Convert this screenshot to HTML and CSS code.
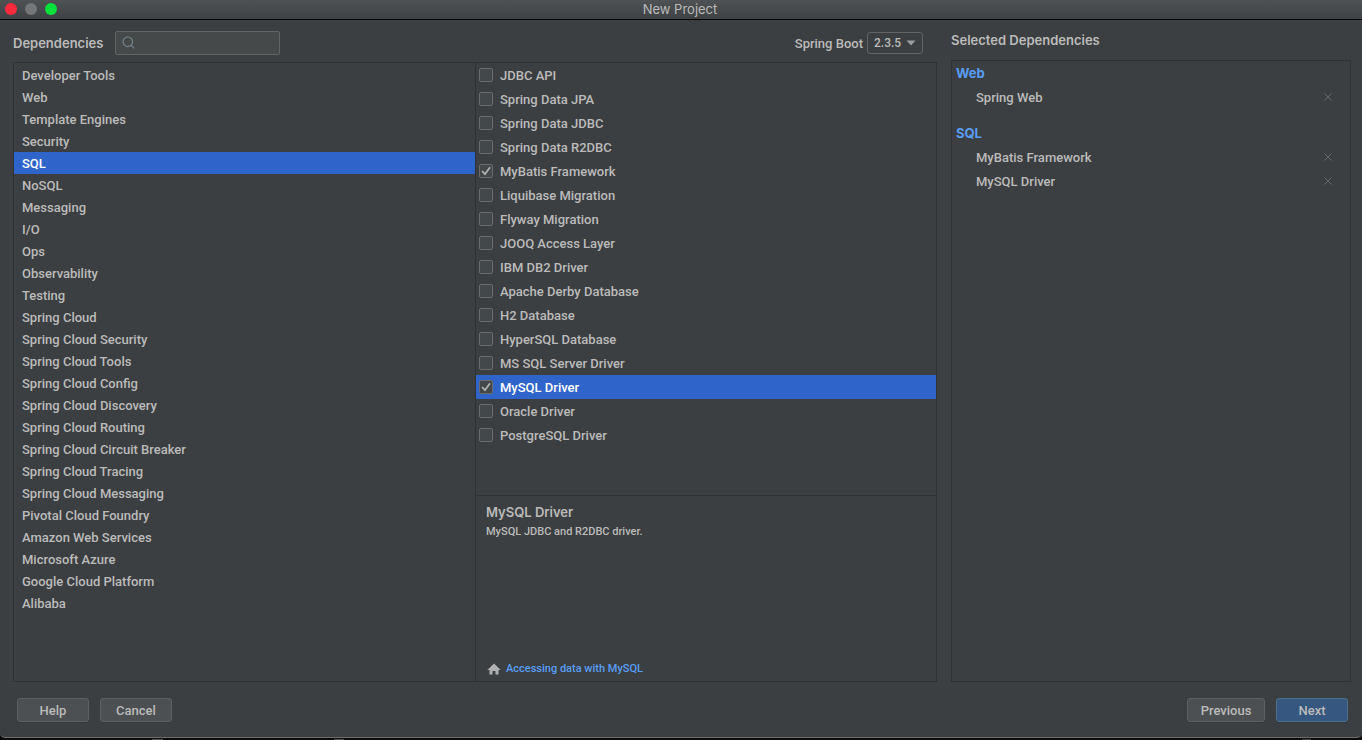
FILE: index.html
```html
<!DOCTYPE html>
<html lang="en">
<head>
<meta charset="utf-8">
<title>New Project</title>
<link rel="stylesheet" href="styles.css">
</head>
<body>
<div class="window">
  <header class="titlebar">
    <div class="lights">
      <button class="light close" type="button" aria-label="Close"></button>
      <button class="light minimize" type="button" aria-label="Minimize" disabled></button>
      <button class="light expand" type="button" aria-label="Zoom"></button>
    </div>
    <h1 class="title">New Project</h1>
  </header>

  <main class="content">
    <section class="picker">
      <div class="toolbar">
        <label class="heading" for="search">Dependencies</label>
        <div class="search">
          <svg class="search-icon" width="14" height="14" viewBox="0 0 14 14" fill="none" stroke="#74838c" stroke-width="1.2"><circle cx="5.800" cy="5.800" r="4.800"/><path d="M9 9.200l3.200 3.200"/></svg>
          <input class="search-input" id="search" type="text">
        </div>
        <label class="version-label" for="version">Spring Boot</label>
        <div class="version">
          <select class="version-select" id="version"><option>2.3.5</option></select>
          <svg class="arrow" width="10" height="6" viewBox="0 0 10 6"><path d="M.5.5h9L5 5.500z" fill="#9a9da0"/></svg>
        </div>
      </div>
      <div class="panels">
        <ul class="categories">
          <li><button class="category" type="button">Developer Tools</button></li>
          <li><button class="category" type="button">Web</button></li>
          <li><button class="category" type="button">Template Engines</button></li>
          <li><button class="category" type="button">Security</button></li>
          <li><button class="category selected" type="button">SQL</button></li>
          <li><button class="category" type="button">NoSQL</button></li>
          <li><button class="category" type="button">Messaging</button></li>
          <li><button class="category" type="button">I/O</button></li>
          <li><button class="category" type="button">Ops</button></li>
          <li><button class="category" type="button">Observability</button></li>
          <li><button class="category" type="button">Testing</button></li>
          <li><button class="category" type="button">Spring Cloud</button></li>
          <li><button class="category" type="button">Spring Cloud Security</button></li>
          <li><button class="category" type="button">Spring Cloud Tools</button></li>
          <li><button class="category" type="button">Spring Cloud Config</button></li>
          <li><button class="category" type="button">Spring Cloud Discovery</button></li>
          <li><button class="category" type="button">Spring Cloud Routing</button></li>
          <li><button class="category" type="button">Spring Cloud Circuit Breaker</button></li>
          <li><button class="category" type="button">Spring Cloud Tracing</button></li>
          <li><button class="category" type="button">Spring Cloud Messaging</button></li>
          <li><button class="category" type="button">Pivotal Cloud Foundry</button></li>
          <li><button class="category" type="button">Amazon Web Services</button></li>
          <li><button class="category" type="button">Microsoft Azure</button></li>
          <li><button class="category" type="button">Google Cloud Platform</button></li>
          <li><button class="category" type="button">Alibaba</button></li>
        </ul>
        <div class="details">
          <div class="options">
            <label class="option"><input class="box" type="checkbox">JDBC API</label>
            <label class="option"><input class="box" type="checkbox">Spring Data JPA</label>
            <label class="option"><input class="box" type="checkbox">Spring Data JDBC</label>
            <label class="option"><input class="box" type="checkbox">Spring Data R2DBC</label>
            <label class="option"><input class="box" type="checkbox" checked>MyBatis Framework</label>
            <label class="option"><input class="box" type="checkbox">Liquibase Migration</label>
            <label class="option"><input class="box" type="checkbox">Flyway Migration</label>
            <label class="option"><input class="box" type="checkbox">JOOQ Access Layer</label>
            <label class="option"><input class="box" type="checkbox">IBM DB2 Driver</label>
            <label class="option"><input class="box" type="checkbox">Apache Derby Database</label>
            <label class="option"><input class="box" type="checkbox">H2 Database</label>
            <label class="option"><input class="box" type="checkbox">HyperSQL Database</label>
            <label class="option"><input class="box" type="checkbox">MS SQL Server Driver</label>
            <label class="option selected"><input class="box" type="checkbox" checked>MySQL Driver</label>
            <label class="option"><input class="box" type="checkbox">Oracle Driver</label>
            <label class="option"><input class="box" type="checkbox">PostgreSQL Driver</label>
          </div>
          <div class="description">
            <h2 class="heading">MySQL Driver</h2>
            <p class="summary">MySQL JDBC and R2DBC driver.</p>
            <a class="guide" href="#guide"><svg width="14" height="12" viewBox="0 0 14 12"><path d="M7 .5L.3 7H2.500v4.500h3V8h3v3.500h3V7h2.200z" fill="#afb1b3"/></svg>Accessing data with MySQL</a>
          </div>
        </div>
      </div>
    </section>

    <section class="chosen">
      <h2 class="heading chosen-heading">Selected Dependencies</h2>
      <div class="chosen-list">
        <h3 class="group">Web</h3>
        <ul class="items">
          <li class="item">Spring Web<button class="remove" type="button" aria-label="Remove Spring Web"><svg width="8" height="8" viewBox="0 0 8 8"><path d="M.5.5l7 7M7.500.5l-7 7"/></svg></button></li>
        </ul>
        <h3 class="group">SQL</h3>
        <ul class="items">
          <li class="item">MyBatis Framework<button class="remove" type="button" aria-label="Remove MyBatis Framework"><svg width="8" height="8" viewBox="0 0 8 8"><path d="M.5.5l7 7M7.500.5l-7 7"/></svg></button></li>
          <li class="item">MySQL Driver<button class="remove" type="button" aria-label="Remove MySQL Driver"><svg width="8" height="8" viewBox="0 0 8 8"><path d="M.5.5l7 7M7.500.5l-7 7"/></svg></button></li>
        </ul>
      </div>
    </section>
  </main>

  <footer class="actions">
    <button class="button" type="button">Help</button>
    <button class="button" type="button">Cancel</button>
    <button class="button previous" type="button">Previous</button>
    <button class="button primary" type="button">Next</button>
  </footer>
</div>
</body>
</html>
```

FILE: styles.css
```css
* { box-sizing: border-box; }

body {
  margin: 0;
  min-height: 100vh;
  display: flex;
  flex-direction: column;
  padding-bottom: 2px;
  background:
    linear-gradient(#555, #555) 152px 100% / 11px 1px no-repeat,
    linear-gradient(#555, #555) 334px 100% / 10px 1px no-repeat,
    linear-gradient(#444, #444) right 51px bottom / 9px 1px no-repeat,
    #0c0c0d;
  color: #bbbbbb;
  font: 500 13px/16px Roboto, "Liberation Sans", sans-serif;
}

button, input, select { font: inherit; color: inherit; }
ul { list-style: none; margin: 0; padding: 0; }
h1, h2, h3, p { margin: 0; }

.window {
  flex: 1;
  display: flex;
  flex-direction: column;
  background: #3c3f41;
  border-bottom: 1px solid #6b6d6e;
  border-radius: 0 0 5px 5px;
}

.titlebar {
  display: grid;
  grid-template-columns: 1fr auto 1fr;
  height: 20px;
  padding: 1px 7px 0 5px;
  background: linear-gradient(#4e5254, #3f4244);
  border-bottom: 1px solid #000;
}
.lights { display: flex; gap: 8px; padding-top: 2px; }
.light { width: 12px; height: 12px; padding: 0; border: 0; border-radius: 50%; }
.close { background: #ff2b3c; }
.minimize { background: #747678; }
.expand { background: #00e13c; }
.title { font: 400 13px/16px Inter, sans-serif; }

.content {
  flex: 1;
  display: grid;
  grid-template-columns: 924fr 400fr;
  gap: 14px;
  padding: 0 11px 0 13px;
}
.picker, .chosen { display: flex; flex-direction: column; min-width: 0; }

.heading { font: 600 13px/16px Inter, sans-serif; }
.toolbar { display: flex; align-items: center; padding: 11px 14px 7px 0; }
.search { position: relative; margin-left: 12px; }
.search-input {
  display: block;
  width: 165px;
  height: 24px;
  padding: 0 8px 0 26px;
  border: 1px solid #646464;
  border-radius: 2px;
  background: #45494a;
}
.search-icon { position: absolute; left: 7px; top: 5px; }
.version-label { margin-left: auto; padding-top: 2px; }
.version { position: relative; margin-left: 4px; }
.version-select {
  appearance: none;
  display: block;
  width: 56px;
  height: 22px;
  padding: 0 6px;
  border: 1px solid #646464;
  border-radius: 3px;
  background: #3c3f41;
  font-size: 12px;
}
.arrow { position: absolute; right: 7px; top: 8px; pointer-events: none; }

.panels {
  flex: 1;
  display: grid;
  grid-template-columns: 1fr 1fr;
  border: 1px solid #2f3234;
}
.categories { padding-top: 1px; }
.category {
  display: block;
  width: 100%;
  height: 22px;
  padding: 2px 8px 0;
  border: 0;
  background: none;
  text-align: left;
}
.selected { background: #2f65ca; color: #fff; }

.details { display: flex; flex-direction: column; border-left: 1px solid #2f3234; }
.options { flex: 1; }
.option { display: flex; align-items: flex-start; gap: 7px; height: 24px; padding: 5px 0 0 3px; }
.box {
  appearance: none;
  width: 14px;
  height: 14px;
  margin: 0;
  border: 1px solid #6b6b6b;
  border-radius: 2px;
  background: #43494a;
}
.box:checked {
  background: #43494a url("data:image/svg+xml,%3Csvg xmlns='http://www.w3.org/2000/svg' viewBox='0 0 12 12'%3E%3Cpath d='M2 6l3 3.200L10 2.300' fill='none' stroke='%23b4b4b4' stroke-width='1.700'/%3E%3C/svg%3E") center / 12px 12px no-repeat;
}

.description {
  display: flex;
  flex-direction: column;
  min-height: 186px;
  padding: 8px 10px 4px;
  border-top: 1px solid #2f3234;
}
.summary { margin-top: 4px; font-size: 11px; }
.guide {
  display: flex;
  align-items: center;
  gap: 5px;
  padding-left: 1px;
  margin-top: auto;
  color: #589df6;
  font-size: 11px;
  text-decoration: none;
}

.chosen-heading { padding: 12px 0; }
.chosen-list { flex: 1; border: 1px solid #2f3234; }
.group { padding: 4px 4px; color: #589df6; font: 700 13px/16px Inter, sans-serif; }
.items { margin-bottom: 12px; }
.item {
  display: flex;
  align-items: flex-start;
  justify-content: space-between;
  height: 24px;
  padding: 5px 18px 0 24px;
}
.remove { display: flex; padding: 3px 0 0; border: 0; background: none; }
.remove path { stroke: #66696b; stroke-width: 1; }

.actions { display: flex; gap: 11px; padding: 16px 14px 15px 17px; }
.button {
  min-width: 72px;
  height: 24px;
  padding: 2px 12px 0;
  border: 1px solid #5e6060;
  border-radius: 3px;
  background: #4c5052;
  box-shadow: 0 1px 0 #36393a;
}
.previous { margin-left: auto; min-width: 78px; }
.primary { background: #365880; border-color: #4c708c; }
```
